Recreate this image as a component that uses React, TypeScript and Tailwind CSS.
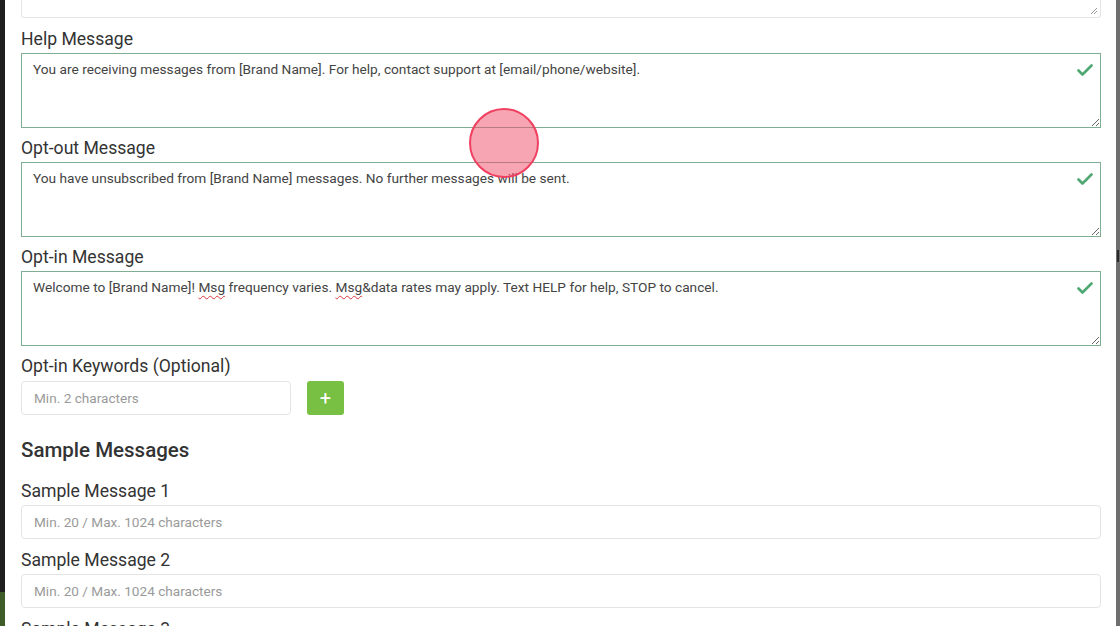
import React from 'react';

function Check() {
  return (
    <svg className="absolute right-[7px] top-[9px]" width="16" height="14" viewBox="0 0 16 14" fill="none">
      <polyline points="1.5,7.5 5.5,11.5 14.5,2.5" stroke="#4fa873" strokeWidth="2.6" strokeLinecap="round" strokeLinejoin="round" />
    </svg>
  );
}

function Spell({ children }: { children: React.ReactNode }) {
  return <span className="underline decoration-wavy decoration-[#e0393e] decoration-1 underline-offset-[3px]">{children}</span>;
}

interface AreaProps {
  label: string;
  children: React.ReactNode;
}

function MessageArea({ label, children }: AreaProps) {
  return (
    <div className="mb-[8px]">
      <label className="block text-[17.6px] leading-[24px] text-[#333] mb-[2px]">{label}</label>
      <div className="relative h-[75px] border border-[#7fae92] bg-white resize-y overflow-auto pl-[11px] pt-[5px] pr-[40px] text-[13.7px] leading-[20px] text-[#444]">
        {children}
        <Check />
      </div>
    </div>
  );
}

function TextInput({ label, placeholder }: { label: string; placeholder: string }) {
  return (
    <div className="mt-[9px]">
      <label className="block text-[17.6px] leading-[24px] text-[#333] mb-[2px]">{label}</label>
      <input
        className="block w-full h-[34px] border border-[#e4e4e4] rounded-[4px] px-[12px] text-[13.6px] text-[#444] placeholder:text-[#9a9a9a] outline-none"
        placeholder={placeholder}
      />
    </div>
  );
}

export default function App() {
  return (
    <div className="relative w-[1120px] h-[626px] overflow-hidden flex bg-white font-['Roboto',sans-serif]">
      {/* Backdrop edge left */}
      <div className="w-[5px] h-full flex flex-col bg-[#1e1e1e]">
        <div className="flex-1" />
        <div className="h-[34px] bg-[#3d5c29]" />
      </div>

      {/* Modal body */}
      <div className="flex-1 h-full pl-[16px] pr-[15px] bg-white">
        <div className="h-[18px] border border-t-0 border-[#e6e6e6] rounded-b-[3px] mb-[9px] relative">
          <svg className="absolute right-[2px] bottom-[2px]" width="8" height="8" viewBox="0 0 8 8">
            <line x1="1" y1="7" x2="7" y2="1" stroke="#999" strokeWidth="1" />
            <line x1="4" y1="7" x2="7" y2="4" stroke="#999" strokeWidth="1" />
          </svg>
        </div>

        <MessageArea label="Help Message">
          You are receiving messages from [Brand Name]. For help, contact support at [email/phone/website].
        </MessageArea>
        <MessageArea label="Opt-out Message">
          You have unsubscribed from [Brand Name] messages. No further messages will be sent.
        </MessageArea>
        <MessageArea label="Opt-in Message">
          Welcome to [Brand Name]! <Spell>Msg</Spell> frequency varies. <Spell>Msg</Spell>&amp;data rates may apply. Text HELP for help, STOP to cancel.
        </MessageArea>

        <div>
          <label className="block text-[17.6px] leading-[24px] text-[#333] mb-[3px]">Opt-in Keywords (Optional)</label>
          <div className="flex items-center gap-[16px]">
            <input
              className="block w-[270px] h-[34px] border border-[#e4e4e4] rounded-[4px] px-[12px] text-[13.6px] placeholder:text-[#9a9a9a] outline-none"
              placeholder="Min. 2 characters"
            />
            <button className="w-[37px] h-[34px] rounded-[3px] bg-[#78c043] text-white text-[20px] leading-none flex items-center justify-center">
              +
            </button>
          </div>
        </div>

        <h3 className="mt-[21px] text-[20.5px] leading-[28px] font-medium text-[#333]">Sample Messages</h3>
        <div className="mt-[15px]">
          <TextInput label="Sample Message 1" placeholder="Min. 20 / Max. 1024 characters" />
          <TextInput label="Sample Message 2" placeholder="Min. 20 / Max. 1024 characters" />
          <TextInput label="Sample Message 3" placeholder="Min. 20 / Max. 1024 characters" />
        </div>
      </div>

      {/* Backdrop edge right */}
      <div className="w-[4px] h-full bg-[#6e6e6e] flex flex-col">
        <div className="h-[250px]" />
        <div className="h-[12px] w-[2px] ml-[1px] bg-[#2a2a2a]" />
      </div>

      {/* Click indicator */}
      <div className="absolute left-[469px] top-[108px] w-[70px] h-[70px] rounded-full border-2 border-[#ef4060] bg-[#f04a68]/50" />
    </div>
  );
}
